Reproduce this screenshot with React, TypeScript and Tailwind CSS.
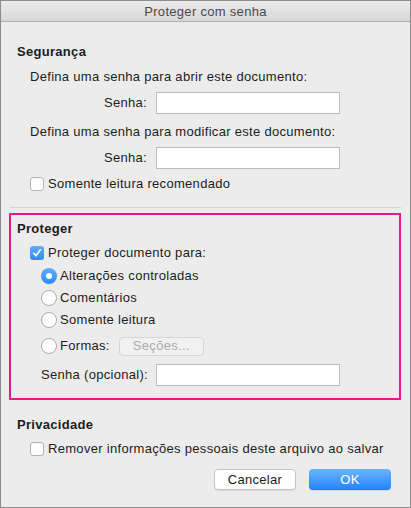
import React from 'react';

const Checkbox: React.FC<{ checked?: boolean }> = ({ checked }) =>
  checked ? (
    <span className="flex h-[14px] w-[14px] shrink-0 items-center justify-center rounded-[3px] bg-gradient-to-b from-[#5fadfb] to-[#2a8cfb]">
      <svg width="10" height="10" viewBox="0 0 10 10">
        <path d="M1.8 5.4 L4 7.8 L8.4 1.8" fill="none" stroke="white" strokeWidth="1.6" strokeLinecap="round" strokeLinejoin="round" />
      </svg>
    </span>
  ) : (
    <span className="h-[14px] w-[14px] shrink-0 rounded-[3px] border border-[#b4b4b4] bg-white shadow-[inset_0_1px_0_rgba(0,0,0,0.04)]" />
  );

const Radio: React.FC<{ checked?: boolean }> = ({ checked }) =>
  checked ? (
    <span className="flex h-[16px] w-[16px] shrink-0 items-center justify-center rounded-full bg-gradient-to-b from-[#5fadfb] to-[#2a8cfb]">
      <span className="h-[6px] w-[6px] rounded-full bg-white" />
    </span>
  ) : (
    <span className="h-[16px] w-[16px] shrink-0 rounded-full border border-[#acacac] bg-white" />
  );

const Field: React.FC<{ label: string; className?: string }> = ({ label, className }) => (
  <div className={`flex h-[22px] items-center ${className ?? ''}`}>
    <span className="w-[146px] shrink-0 whitespace-nowrap text-right">{label}</span>
    <span className="ml-[9px] h-[22px] w-[184px] shrink-0 border border-[#bdbdbd] bg-white" />
  </div>
);

export default function App() {
  return (
    <div className="flex h-[508px] w-[411px] flex-col border border-[#8c8c8c] bg-[#ececec] font-['Liberation_Sans',Arial,sans-serif] text-[13px] leading-[16px] tracking-[0.3px] text-[#1c1c1c]">
      {/* title bar */}
      <div className="h-[21px] shrink-0 border-b border-[#b2b2b2] bg-gradient-to-b from-[#ececec] to-[#d6d6d6] text-center leading-[21px] text-[#4a4a4a]">
        Proteger com senha
      </div>

      {/* Segurança */}
      <div className="mt-[22px] h-[16px] pl-[16px] font-bold">Segurança</div>
      <div className="mt-[9px] h-[16px] pl-[29px]">Defina uma senha para abrir este documento:</div>
      <Field label="Senha:" className="mt-[7px]" />
      <div className="mt-[10px] h-[16px] pl-[29px]">Defina uma senha para modificar este documento:</div>
      <Field label="Senha:" className="mt-[7px]" />
      <div className="mt-[7px] flex h-[16px] items-center gap-[4px] pl-[29px]">
        <Checkbox />
        <span>Somente leitura recomendado</span>
      </div>
      <div className="mx-[9px] mt-[15px] h-px bg-[#d4d4d4]" />

      {/* Proteger */}
      <div className="ml-[8px] mt-[5px] w-[392px] border-2 border-[#ea168c] pb-[12px]">
        <div className="mt-[6px] h-[16px] pl-[6px] font-bold">Proteger</div>
        <div className="mt-[8px] flex h-[16px] items-center gap-[4px] pl-[19px]">
          <Checkbox checked />
          <span>Proteger documento para:</span>
        </div>
        <div className="mt-[7px] flex h-[16px] items-center gap-[3px] pl-[30px]">
          <Radio checked />
          <span>Alterações controladas</span>
        </div>
        <div className="mt-[6px] flex h-[16px] items-center gap-[3px] pl-[30px]">
          <Radio />
          <span>Comentários</span>
        </div>
        <div className="mt-[6px] flex h-[16px] items-center gap-[3px] pl-[30px]">
          <Radio />
          <span>Somente leitura</span>
        </div>
        <div className="mt-[8px] flex h-[20px] items-center gap-[3px] pl-[30px]">
          <Radio />
          <span>Formas:</span>
          <span className="ml-[6px] flex h-[19px] w-[85px] items-center justify-center rounded-[4px] border border-[#d6d6d6] bg-[#f1f1f1] text-[#ababab]">
            Seções...
          </span>
        </div>
        <div className="mt-[8px] flex h-[22px] items-center">
          <span className="w-[136px] shrink-0 whitespace-nowrap pl-[30px]">Senha (opcional):</span>
          <span className="ml-[9px] h-[22px] w-[184px] shrink-0 border border-[#bdbdbd] bg-white" />
        </div>
      </div>

      {/* Privacidade */}
      <div className="mt-[17px] h-[16px] pl-[16px] font-bold">Privacidade</div>
      <div className="mt-[8px] flex h-[16px] items-center gap-[4px] pl-[29px]">
        <Checkbox />
        <span className="whitespace-nowrap">Remover informações pessoais deste arquivo ao salvar</span>
      </div>
      <div className="mt-[12px] flex justify-end gap-[13px] pr-[19px]">
        <button className="h-[21px] w-[82px] rounded-[4px] border border-[#c4c4c4] bg-white tracking-[0.3px] text-[#1c1c1c] shadow-[0_1px_0_rgba(0,0,0,0.08)]">
          Cancelar
        </button>
        <button className="h-[21px] w-[82px] rounded-[4px] bg-gradient-to-b from-[#6ab4fb] to-[#1f83fb] tracking-[0.3px] text-white shadow-[0_1px_0_rgba(0,0,0,0.1)]">
          OK
        </button>
      </div>
    </div>
  );
}
